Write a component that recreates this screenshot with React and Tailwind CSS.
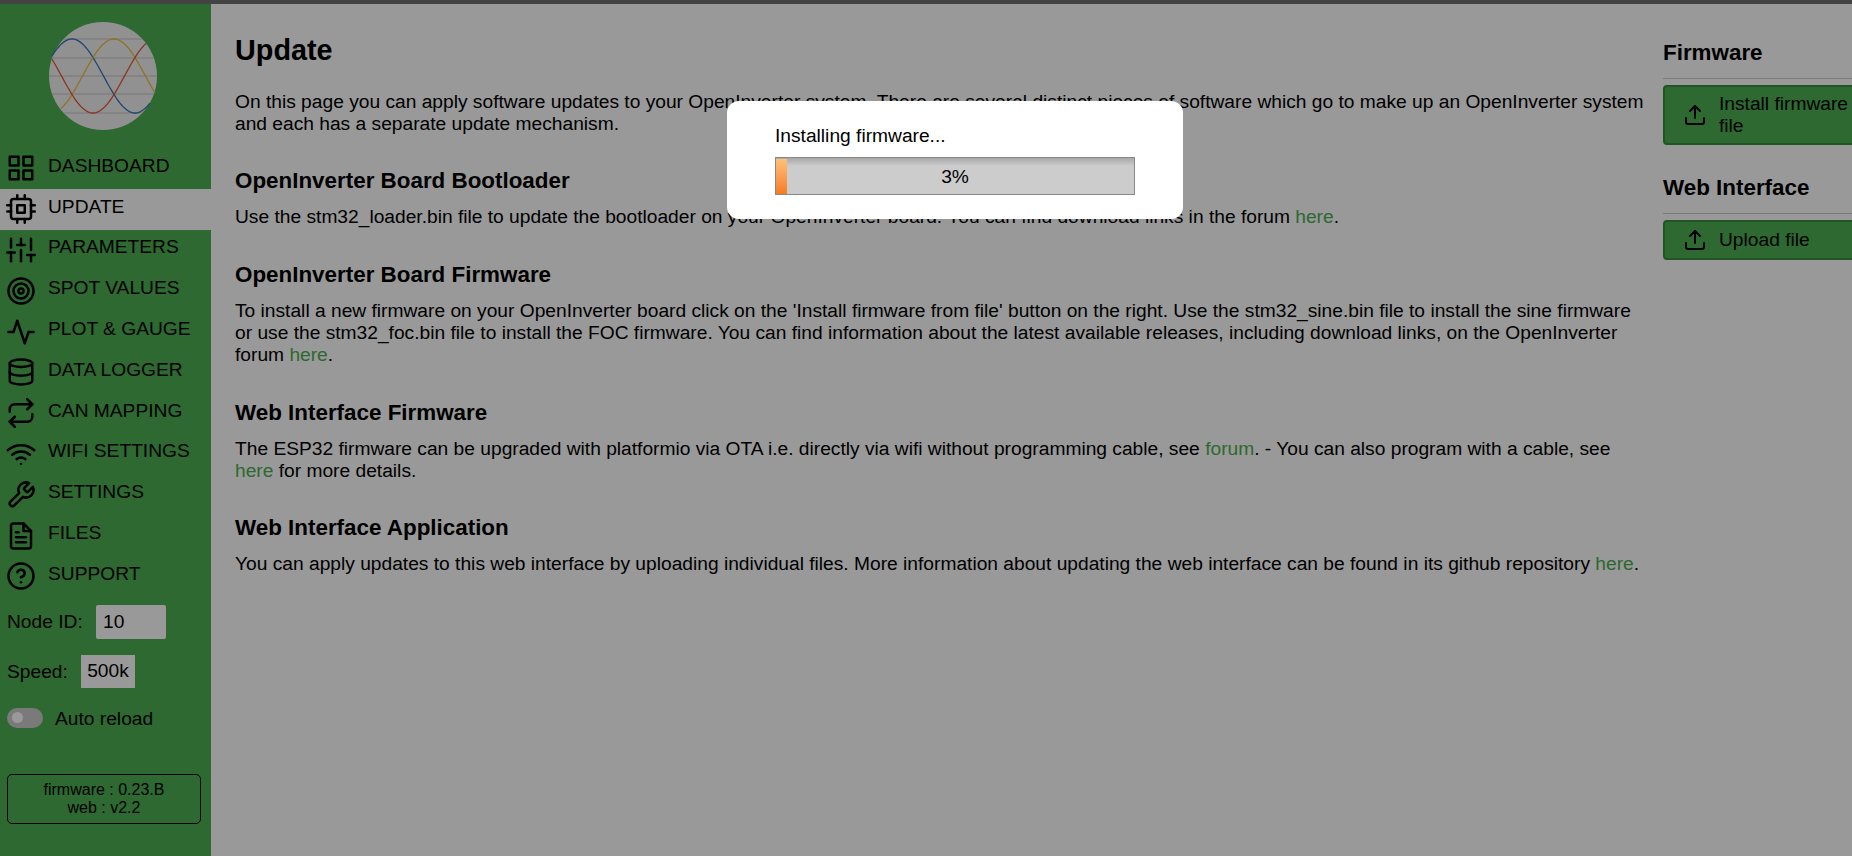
import React from 'react';
import {
    FiGrid, FiCpu, FiSliders, FiTarget, FiActivity, FiDatabase,
    FiRepeat, FiWifi, FiTool, FiFileText, FiHelpCircle, FiUpload,
} from 'react-icons/fi';

const navItems = [
    { label: 'DASHBOARD', icon: FiGrid },
    { label: 'UPDATE', icon: FiCpu, active: true },
    { label: 'PARAMETERS', icon: FiSliders },
    { label: 'SPOT VALUES', icon: FiTarget },
    { label: 'PLOT & GAUGE', icon: FiActivity },
    { label: 'DATA LOGGER', icon: FiDatabase },
    { label: 'CAN MAPPING', icon: FiRepeat },
    { label: 'WIFI SETTINGS', icon: FiWifi },
    { label: 'SETTINGS', icon: FiTool },
    { label: 'FILES', icon: FiFileText },
    { label: 'SUPPORT', icon: FiHelpCircle },
];

// one sine wave across the logo, peak at peakX
const wave = (peakX, from, to) => {
    const pts = [];
    for (let x = from; x <= to; x += 2) {
        pts.push(`${x},${(54 - 37 * Math.cos(((x - peakX) / 126) * 2 * Math.PI)).toFixed(1)}`);
    }
    return pts.join(' ');
};

const Logo = () => (
    <svg viewBox="0 0 108 108" className="w-[108px] h-[108px]">
        <clipPath id="logo-clip">
            <circle cx="54" cy="54" r="54" />
        </clipPath>
        <circle cx="54" cy="54" r="54" fill="#f2f2f2" />
        <g stroke="#d4d4d4" strokeWidth="1.5" clipPath="url(#logo-clip)">
            <line x1="0" y1="17" x2="108" y2="17" />
            <line x1="0" y1="36" x2="108" y2="36" />
            <line x1="0" y1="54" x2="108" y2="54" />
            <line x1="0" y1="72" x2="108" y2="72" />
            <line x1="0" y1="91" x2="108" y2="91" />
        </g>
        <g fill="none" strokeWidth="1.3">
            <polyline points={wave(23, 3, 101)} stroke="#3a74bc" />
            <polyline points={wave(65, 12, 106)} stroke="#eec03a" />
            <polyline points={wave(107, 3, 98)} stroke="#e65a34" />
        </g>
    </svg>
);

const A = ({ children }) => <a className="text-[#4caf50]">{children}</a>;

const SideButton = ({ children }) => (
    <button className="w-[267px] min-h-[40px] flex items-center gap-[12px] pl-[18px] pr-2 py-[6px] bg-[#4caf50] border-2 border-[#388e3c] rounded-[4px] text-left">
        <FiUpload className="w-[24px] h-[24px] shrink-0" />
        <span>{children}</span>
    </button>
);

const H2 = ({ children }) => <h2 className="mt-[33.8px] text-[22.4px] leading-[26px] font-bold">{children}</h2>;

export default function App() {
    return (
        <div className="relative h-[856px] w-[1852px] overflow-hidden bg-white text-black text-[19.2px] leading-[22px] font-['Liberation_Sans',Arial,sans-serif]">
            <div className="h-[4px] bg-[#707070]" />
            <div className="flex h-[852px]">
                {/* Sidebar */}
                <aside className="w-[211px] shrink-0 bg-[#4caf50] flex flex-col">
                    <div className="pl-[49px] pt-[18px] pb-[18px]">
                        <Logo />
                    </div>
                    <nav className="flex flex-col">
                        {navItems.map((item) => (
                            <div key={item.label} className={item.active ? 'flex items-center h-[40.8px] pl-[6px] bg-white' : 'flex items-center h-[40.8px] pl-[6px]'}>
                                <item.icon className="w-[30px] h-[30px] mr-[12px] shrink-0" />
                                <span className="-mt-[5px]">{item.label}</span>
                            </div>
                        ))}
                    </nav>
                    <div className="flex items-center pl-[7px] mt-[8.2px] h-[34px]">
                        <span className="w-[89px]">Node ID:</span>
                        <div className="w-[70px] h-[34px] pl-[7px] flex items-center bg-white rounded-[2px]">10</div>
                    </div>
                    <div className="flex items-center pl-[7px] mt-[16px] h-[33px]">
                        <span className="w-[74px] mt-[2px]">Speed:</span>
                        <div className="w-[54px] h-[33px] flex items-center justify-center bg-white">500k</div>
                    </div>
                    <div className="flex items-center pl-[7px] mt-[20px] h-[20px]">
                        <div className="w-[36px] h-[20px] rounded-full bg-[#cccccc] mr-[12px] flex items-center pl-[5px]">
                            <div className="w-[11px] h-[11px] rounded-full bg-white" />
                        </div>
                        <span className="mt-[2px]">Auto reload</span>
                    </div>
                    <div className="ml-[7px] w-[194px] mt-[46px] h-[50px] border border-black rounded-[5px] flex flex-col items-center justify-center text-[16px] leading-[18px]">
                        <span>firmware : 0.23.B</span>
                        <span>web : v2.2</span>
                    </div>
                </aside>

                {/* Main Content */}
                <main className="w-[1452px] shrink-0 pl-[24px] pr-[16px] pt-[27px]">
                    <h1 className="text-[28.8px] leading-[38px] font-bold">Update</h1>
                    <p className="mt-[22px]">On this page you can apply software updates to your OpenInverter system. There are several distinct pieces of software which go to make up an OpenInverter system and each has a separate update mechanism.</p>
                    <h2 className="mt-[33px] text-[22.4px] leading-[26px] font-bold">OpenInverter Board Bootloader</h2>
                    <p className="mt-[12px]">Use the stm32_loader.bin file to update the bootloader on your OpenInverter board. You can find download links in the forum <A>here</A>.</p>
                    <H2>OpenInverter Board Firmware</H2>
                    <p className="mt-[12px]">To install a new firmware on your OpenInverter board click on the 'Install firmware from file' button on the right. Use the stm32_sine.bin file to install the sine firmware or use the stm32_foc.bin file to install the FOC firmware. You can find information about the latest available releases, including download links, on the OpenInverter forum <A>here</A>.</p>
                    <H2>Web Interface Firmware</H2>
                    <p className="mt-[12px]">The ESP32 firmware can be upgraded with platformio via OTA i.e. directly via wifi without programming cable, see <A>forum</A>. - You can also program with a cable, see <A>here</A> for more details.</p>
                    <H2>Web Interface Application</H2>
                    <p className="mt-[12px]">You can apply updates to this web interface by uploading individual files. More information about updating the web interface can be found in its github repository <A>here</A>.</p>
                </main>

                {/* Right column */}
                <div className="w-[267px] shrink-0 pt-[36px]">
                    <h3 className="text-[22.4px] leading-[26px] font-bold">Firmware</h3>
                    <div className="mt-[12px] mb-[6px] border-t border-[#cccccc]" />
                    <SideButton>Install firmware from file</SideButton>
                    <h3 className="mt-[30px] text-[22.4px] leading-[26px] font-bold">Web Interface</h3>
                    <div className="mt-[12px] mb-[6px] border-t border-[#cccccc]" />
                    <SideButton>Upload file</SideButton>
                </div>
            </div>

            {/* Overlay */}
            <div className="absolute inset-0 bg-black/40" />
            <div className="absolute left-[727px] top-[101px] w-[456px] h-[118px] bg-white rounded-[12px] pt-[24px] px-[48px]">
                <p>Installing firmware...</p>
                <div className="relative mt-[10px] w-[360px] h-[38px] border border-[#888888] bg-[#cccccc] overflow-hidden">
                    <div className="absolute inset-x-0 top-0 h-[8px] bg-gradient-to-b from-[#a8a8a8] to-[#cccccc]" />
                    <div className="absolute left-0 top-[1px] bottom-0 w-[11px] bg-gradient-to-b from-[#ffc078] to-[#f57c1f]" />
                    <div className="relative h-full flex items-center justify-center pt-[1px]">3%</div>
                </div>
            </div>
        </div>
    );
}
